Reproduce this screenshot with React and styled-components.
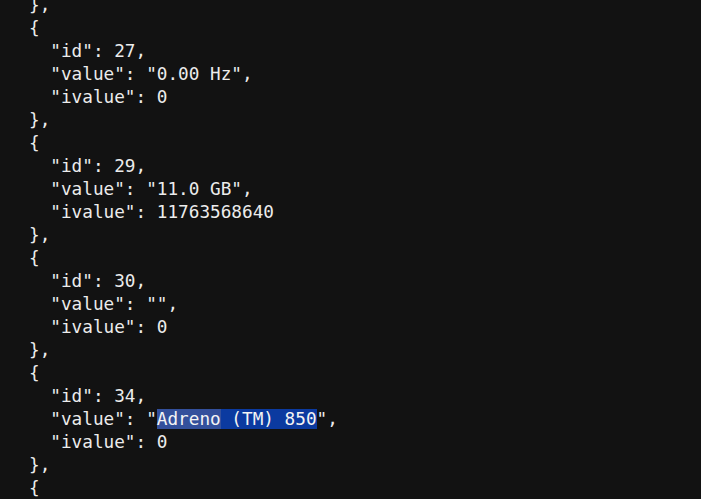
import React from "react";
import styled, { createGlobalStyle } from "styled-components";

const GlobalStyle = createGlobalStyle`
  html, body {
    margin: 0;
    padding: 0;
    background: #121212;
  }
  body {
    width: 701px;
    height: 499px;
    overflow: hidden;
  }
`;

const Viewer = styled.div`
  width: 701px;
  height: 499px;
  overflow: hidden;
  background: #121212;
  box-sizing: border-box;
`;

const Code = styled.div`
  margin-top: -6px;
  padding-left: 29px;
  font-family: "DejaVu Sans Mono", "Liberation Mono", monospace;
  font-size: 17.7px;
  line-height: 23px;
  color: #ececec;
`;

const Line = styled.div`
  height: 23px;
  white-space: pre;
  padding-left: ${(p) => (p.$depth || 0) * 21.3}px;
`;

// selection: the word under the cursor is tinted lighter than the rest
const Selected = styled.span`
  background: ${(p) => (p.$word ? "#33509c" : "#0b3aa0")};
  color: #f4f4f4;
`;

const entries = [
  { id: 27, value: "0.00 Hz", ivalue: 0 },
  { id: 29, value: "11.0 GB", ivalue: 11763568640 },
  { id: 30, value: "", ivalue: 0 },
  { id: 34, value: "Adreno (TM) 850", ivalue: 0, selected: true },
];

const ValueText = ({ entry }) => {
  if (!entry.selected) return <>"{entry.value}"</>;
  return (
    <>
      "<Selected $word>Adreno</Selected>
      <Selected> (TM) 850</Selected>"
    </>
  );
};

export default function App() {
  return (
    <Viewer>
      <GlobalStyle />
      <Code>
        <Line>{"},"}</Line>
        {entries.map((e) => (
          <React.Fragment key={e.id}>
            <Line>{"{"}</Line>
            <Line $depth={1}>"id": {e.id},</Line>
            <Line $depth={1}>
              "value": <ValueText entry={e} />,
            </Line>
            <Line $depth={1}>"ivalue": {e.ivalue}</Line>
            <Line>{"},"}</Line>
          </React.Fragment>
        ))}
        <Line>{"{"}</Line>
      </Code>
    </Viewer>
  );
}
